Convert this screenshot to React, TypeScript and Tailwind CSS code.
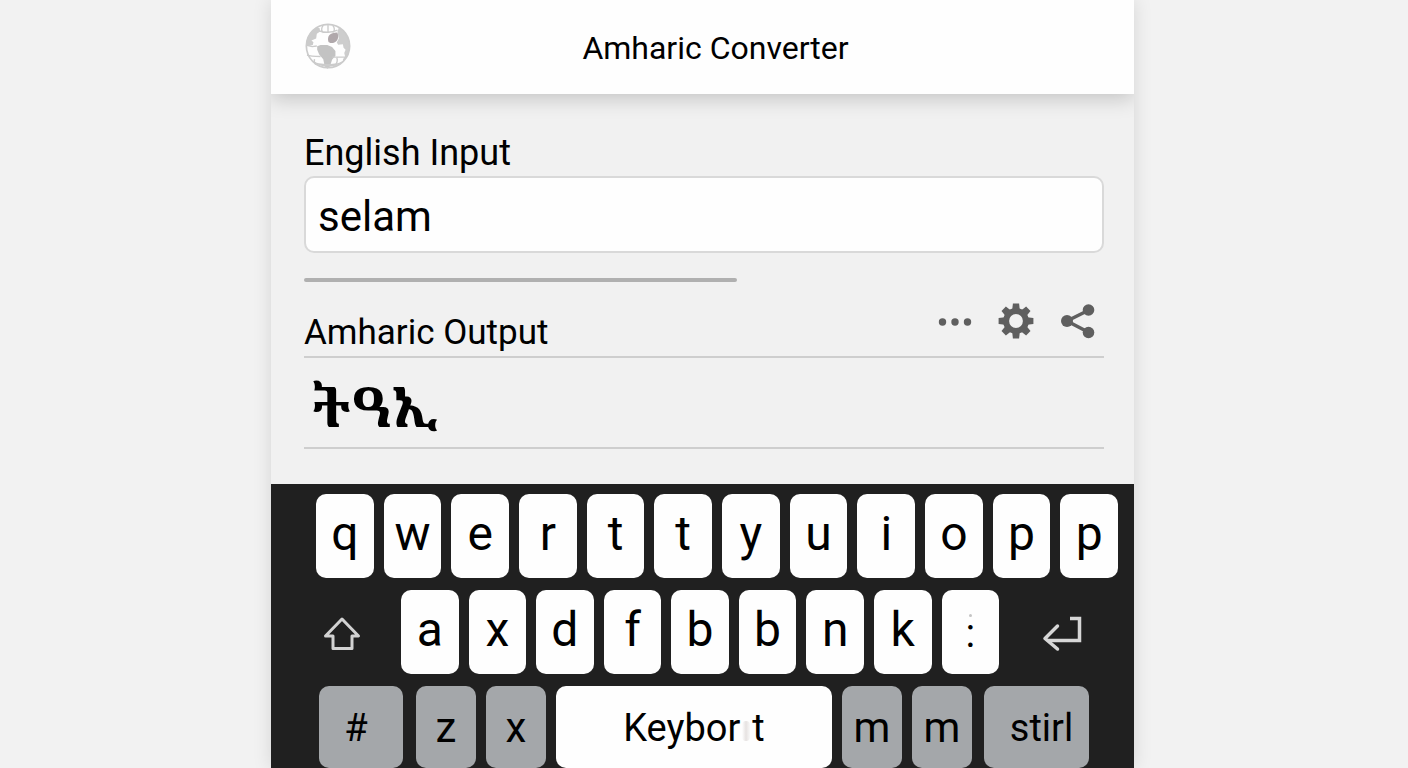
import { useState, type ReactNode } from "react";

function GlobeIcon() {
  return (
    <svg viewBox="18 21 136 136" className="size-[46px] shrink-0" aria-hidden="true">
      <circle cx="86" cy="89" r="64" fill="#fefefe" />
      <path d="M50 36C32 48 22 66 21 86l10 2 10-2 2-8-6-5 14-6 2-14 10-7-2-10Z" fill="#cbcbcb" />
      <path d="M118 34c20 10 32 32 32 56 0 18-7 34-18 44l-2-4 6-12-2-8 4-10-6-6-2-10-14 1-4-6 6-12-4-20Z" fill="#cdcdcd" />
      <path d="M87 76c-4-16 4-27 26-27 6 8 4 28-12 31-8 1-12 0-14-4Z" fill="#b0a8ab" />
      <path d="M54 90l10-4 20 0 14 6 10 12 0 14-10 12-6 18-8 8-8-8-4-20-12-14-6-14Z" fill="#c3c3c3" />
      <path d="M21 86l18 5 14-2M24 116c10 4 20 4 40 4M98 122h36M46 128c-2 8 0 12 4 16M86 24v26M72 28c-8 10-6 16 0 22M100 28c8 10 6 16 0 22M60 44c14 6 38 6 54-2M112 124c4 8 0 16-6 24" fill="none" stroke="#cbcbcb" strokeWidth="4" />
      <path d="M38 132c24 24 72 24 96 0-22 14-74 14-96 0Z" fill="#cbcbcb" />
      <circle cx="86" cy="89" r="64" fill="none" stroke="#cbcbcb" strokeWidth="5" />
    </svg>
  );
}

function DotsIcon() {
  return (
    <svg viewBox="0 0 34 34" className="size-[34px]" fill="#5f5f5f" aria-hidden="true">
      <circle cx="4.500" cy="18" r="3.700" />
      <circle cx="17" cy="18" r="3.700" />
      <circle cx="29.500" cy="18" r="3.700" />
    </svg>
  );
}

function GearIcon() {
  const angles = [0, 45, 90, 135, 180, 225, 270, 315];
  return (
    <svg viewBox="-18 -18 36 36" className="size-[36px]" fill="#5f5f5f" aria-hidden="true">
      <circle r="9.900" fill="none" stroke="#5f5f5f" strokeWidth="6" />
      {angles.map((a) => (
        <path key={a} d="M-3.800 -11 L-3.100 -17.400 H3.100 L3.800 -11Z" transform={`rotate(${a})`} />
      ))}
    </svg>
  );
}

function ShareIcon() {
  return (
    <svg viewBox="0 0 36 36" className="size-[36px]" fill="#5f5f5f" aria-hidden="true">
      <path d="M29 7 7 18l22 11.500" fill="none" stroke="#5f5f5f" strokeWidth="3.500" />
      <circle cx="7" cy="18" r="6" />
      <circle cx="28.500" cy="7" r="5.800" />
      <circle cx="28.500" cy="29.500" r="5.800" />
    </svg>
  );
}

function ShiftIcon() {
  return (
    <svg viewBox="0 0 38 36" className="h-9 w-[38px]" fill="none" stroke="#d2d2d2" strokeWidth="3" strokeLinejoin="round" aria-hidden="true">
      <path d="M19 3 35.500 20H29v12.500H10V20H2.500Z" />
    </svg>
  );
}

function EnterIcon() {
  return (
    <svg viewBox="0 0 40 36" className="h-9 w-10" fill="none" stroke="#d6d6d6" strokeWidth="3.500" aria-hidden="true">
      <path d="M28 2.500h9.500V24.500H6" />
      <path d="M15.500 10 3 22.500 15.500 33" strokeLinejoin="round" strokeLinecap="round" />
    </svg>
  );
}

type KeyProps = {
  label: string;
  className: string;
  onPress: () => void;
  children?: ReactNode;
};

function Key({ label, className, onPress, children }: KeyProps) {
  return (
    <button
      type="button"
      aria-label={label}
      onClick={onPress}
      className={`flex min-w-0 items-center justify-center rounded-[10px] text-black ${className}`}
    >
      {children ?? label}
    </button>
  );
}

const topRow = ["q", "w", "e", "r", "t", "t", "y", "u", "i", "o", "p", "p"];
const middleRow = ["a", "x", "d", "f", "b", "b", "n", "k"];
const letter = "flex-1 bg-[#fefefe] pb-1 text-[48px]";
const grayLetter = "w-[60px] bg-[#a4a7aa] text-[42px]";

export default function App() {
  const [text, setText] = useState("selam");
  const add = (s: string) => setText((t) => t + s);

  return (
    <div className="min-h-screen overflow-hidden bg-[#f2f2f2] pr-[3px] font-['Roboto','Liberation_Sans',sans-serif] text-black">
      <main className="mx-auto flex min-h-screen max-w-[863px] flex-col bg-[#f1f1f1] shadow-[0_0_18px_rgba(0,0,0,0.12)]">
        <div className="overflow-x-clip pb-6">
          <header className="flex h-[94px] items-center bg-[#fefefe] px-[34px] pb-[2px] shadow-[0_4px_20px_rgba(0,0,0,0.20)]">
            <GlobeIcon />
            <h1 className="flex-1 pt-[3px] pr-[20px] text-center text-[32px] leading-[38px]">Amharic Converter</h1>
          </header>
        </div>

        <section className="flex flex-1 flex-col pt-3 pr-[30px] pl-[33px]">
          <label htmlFor="english" className="text-[36px] leading-[46px]">
            English Input
          </label>
          <input
            id="english"
            value={text}
            onChange={(e) => setText(e.target.value)}
            className="h-[77px] w-full rounded-[10px] border-2 border-[#d9d9d9] bg-[#fefefe] px-3 pt-[3px] text-[42px] outline-none"
          />
          <div className="mt-[25px] h-1 w-[433px] max-w-full rounded-full bg-[#b0b0b0]" />

          <div className="mt-4 flex h-[60px] items-end justify-between border-b-2 border-[#cecece]">
            <h2 className="text-[35px] leading-[46px]">Amharic Output</h2>
            <div className="flex items-center gap-[26px] self-start pt-[5px] pr-2">
              <button type="button" aria-label="More options"><DotsIcon /></button>
              <button type="button" aria-label="Settings"><GearIcon /></button>
              <button type="button" aria-label="Share"><ShareIcon /></button>
            </div>
          </div>
          <output htmlFor="english" className="flex h-[91px] items-center border-b-2 border-[#cecece] pt-1 pl-2 font-['Noto_Serif_Ethiopic',serif] text-[56px] leading-[64px] font-bold">
            <span lang="am">ትዓኢ</span>
          </output>
        </section>

        <section aria-label="Keyboard" className="mt-[35px] flex flex-col gap-3 bg-[#202020] pt-[10px] pr-4 pl-[45px]">
          <div className="flex h-[84px] gap-[10px]">
            {topRow.map((k, i) => (
              <Key key={i} label={k} className={letter} onPress={() => add(k)} />
            ))}
          </div>

          <div className="flex h-[84px]">
            <button type="button" aria-label="Shift" className="flex w-[85px] items-center pt-1 pl-[7px]">
              <ShiftIcon />
            </button>
            <div className="flex flex-1 gap-[10px]">
              {middleRow.map((k, i) => (
                <Key key={i} label={k} className={letter} onPress={() => add(k)} />
              ))}
              <Key label=":" className="flex-1 bg-[#fefefe] pt-1 text-[40px]" onPress={() => add(":")}>
                <span className="relative">
                  :
                  <span className="absolute top-2.5 left-1 size-[3px] rounded-full bg-[#c4c4c4]" />
                </span>
              </Key>
            </div>
            <button type="button" aria-label="Enter" className="flex w-[119px] items-center justify-end pt-1 pr-9">
              <EnterIcon />
            </button>
          </div>

          <div className="flex h-[82px] gap-[10px] pr-[29px] pl-[3px]">
            <Key label="#" className="mr-[3px] w-[84px] bg-[#a4a7aa] pt-0.5 pr-2.5 text-[38px]" onPress={() => add("#")} />
            <Key label="z" className={grayLetter} onPress={() => add("z")} />
            <Key label="x" className={grayLetter} onPress={() => add("x")} />
            <Key label="Space" className="flex-1 bg-[#fefefe] pt-0.5 text-[38px]" onPress={() => add(" ")}>
              <span>
                Keybor
                <span className="mx-0.5 inline-block h-5 w-2 rounded-sm bg-gradient-to-r from-[#fefefe] via-[#e6e2e1] to-[#f8f8f8]" />
                t
              </span>
            </Key>
            <Key label="m" className={grayLetter} onPress={() => add("m")} />
            <Key label="m" className={grayLetter} onPress={() => add("m")} />
            <Key label="stirl" className="ml-[2px] w-[105px] bg-[#a4a7aa] pt-0.5 pl-2.5 text-[38px]" onPress={() => add("")} />
          </div>
        </section>
      </main>
    </div>
  );
}
